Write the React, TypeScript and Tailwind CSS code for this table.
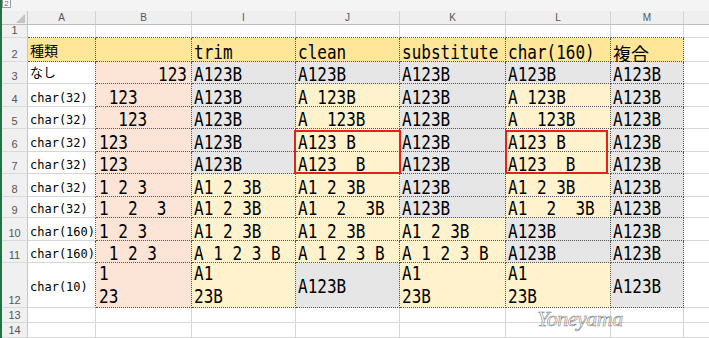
import React from "react";

type Bg = "w" | "g" | "y" | "p" | "h";
type Cell = { t: string; bg: Bg; kind?: "a" | "jp14" | "jp13" | "jp18"; r?: boolean; c?: boolean; red?: "J" | "L" };
type Row = { n: number; h: string; cells: Cell[] };

const BG: Record<Bg, string> = {
  w: "bg-white",
  g: "bg-[#e7e6e6]",
  y: "bg-[#fff2cc]",
  p: "bg-[#fce4d6]",
  h: "bg-[#ffe699]",
};

const WIDTHS = ["w-[68px]", "w-[96px]", "w-[104px]", "w-[104px]", "w-[106px]", "w-[105px]", "w-[73px]"];
const LETTERS = ["A", "B", "I", "J", "K", "L", "M"];

const g = (t = "A123B"): Cell => ({ t, bg: "g" });
const y = (t: string): Cell => ({ t, bg: "y" });
const a = (t: string): Cell => ({ t, bg: "w", kind: "a" });
const p = (t: string): Cell => ({ t, bg: "p" });

const ROWS: Row[] = [
  {
    n: 2,
    h: "h-[24px]",
    cells: [
      { t: "種類", bg: "h", kind: "jp14" },
      { t: "", bg: "h" },
      { t: "trim", bg: "h" },
      { t: "clean", bg: "h" },
      { t: "substitute", bg: "h" },
      { t: "char(160)", bg: "h" },
      { t: "複合", bg: "h", kind: "jp18" },
    ],
  },
  { n: 3, h: "h-[22px]", cells: [{ t: "なし", bg: "w", kind: "jp13" }, { t: "123", bg: "p", r: true }, g(), g(), g(), g(), g()] },
  { n: 4, h: "h-[23px]", cells: [a("char(32)"), p(" 123"), g(), y("A 123B"), g(), y("A 123B"), g()] },
  { n: 5, h: "h-[22px]", cells: [a("char(32)"), p("  123"), g(), y("A  123B"), g(), y("A  123B"), g()] },
  {
    n: 6,
    h: "h-[23px]",
    cells: [a("char(32)"), p("123"), g(), { t: "A123 B", bg: "y", red: "J" }, g(), { t: "A123 B", bg: "y", red: "L" }, g()],
  },
  { n: 7, h: "h-[22px]", cells: [a("char(32)"), p("123"), g(), y("A123  B"), g(), y("A123  B"), g()] },
  { n: 8, h: "h-[23px]", cells: [a("char(32)"), p("1 2 3"), y("A1 2 3B"), y("A1 2 3B"), g(), y("A1 2 3B"), g()] },
  { n: 9, h: "h-[21px]", cells: [a("char(32)"), p("1  2  3"), y("A1 2 3B"), y("A1  2  3B"), g(), y("A1  2  3B"), g()] },
  { n: 10, h: "h-[23px]", cells: [a("char(160)"), p("1 2 3"), y("A1 2 3B"), y("A1 2 3B"), y("A1 2 3B"), g(), g()] },
  { n: 11, h: "h-[22px]", cells: [a("char(160)"), p(" 1 2 3"), y("A 1 2 3 B"), y("A 1 2 3 B"), y("A 1 2 3 B"), g(), g()] },
  {
    n: 12,
    h: "h-[45px]",
    cells: [
      { t: "char(10)", bg: "w", kind: "a", c: true },
      p("1\n23"),
      y("A1\n23B"),
      { t: "A123B", bg: "g", c: true },
      y("A1\n23B"),
      y("A1\n23B"),
      { t: "A123B", bg: "g", c: true },
    ],
  },
];

function RowHead({ n }: { n?: number }) {
  return (
    <div className="w-[26px] shrink-0 flex items-end justify-center pb-[1px] bg-[#f0f0f0] border-r border-b border-r-[#c6c6c6] border-b-[#dadada] font-['Liberation_Sans',sans-serif] text-[11px] leading-[12px] text-[#555]">
      {n}
    </div>
  );
}

function CellView({ cell, col, row }: { cell: Cell; col: number; row: number }) {
  const colA = col === 0;
  const border =
    colA && row > 2
      ? "border-r border-b border-b-[#d6d6d6] border-r-[#555] [border-right-style:dotted]"
      : "border-r border-b border-dotted border-[#555]";
  const multi = cell.t.includes("\n");
  const pad = col === 1 ? (cell.r ? "pr-[4px] justify-end" : "pl-[3px]") : "pl-[2px]";

  let content: React.ReactNode = null;
  if (cell.kind === "a") {
    content = <span className="whitespace-pre font-['DejaVu_Sans_Mono',monospace] text-[12px] leading-[14px] text-black">{cell.t}</span>;
  } else if (cell.kind === "jp14") {
    content = <span className="font-['Noto_Sans_CJK_JP',sans-serif] text-[14px] leading-[16px] text-black">{cell.t}</span>;
  } else if (cell.kind === "jp13") {
    content = <span className="font-['Noto_Sans_CJK_JP',sans-serif] text-[13px] leading-[16px] text-black">{cell.t}</span>;
  } else if (cell.kind === "jp18") {
    content = <span className="font-['Noto_Sans_CJK_JP',sans-serif] text-[18px] leading-[16px] text-black">{cell.t}</span>;
  } else if (cell.t) {
    // tall, narrow gothic look: 16px mono stretched vertically
    content = (
      <span
        className={`inline-block whitespace-pre font-['DejaVu_Sans_Mono',monospace] text-[16px] text-black origin-bottom scale-y-[1.25] translate-y-[2px] ${
          multi ? "leading-[18.4px]" : "leading-[16px]"
        }`}
      >
        {cell.t}
      </span>
    );
  }

  const valign = cell.c
    ? "items-center pt-[3px]"
    : cell.kind === "a"
      ? "items-end pb-[1px]"
      : cell.kind === "jp14" || cell.kind === "jp13"
        ? "items-end pb-[3px]"
        : "items-end";

  return (
    <div className={`relative shrink-0 flex ${WIDTHS[col]} ${BG[cell.bg]} ${border} ${pad} ${valign}`}>
      {content}
      {cell.red === "J" && (
        <div className="absolute left-[-2px] top-[1px] w-[107px] h-[44px] border-2 border-[#e8201c] z-10 pointer-events-none" />
      )}
      {cell.red === "L" && (
        <div className="absolute left-[-1px] top-[1px] w-[103px] h-[44px] border-2 border-[#e8201c] z-10 pointer-events-none" />
      )}
    </div>
  );
}

function EmptyRow({ n, h, dottedBottom }: { n: number; h: string; dottedBottom?: boolean }) {
  return (
    <div className={`flex ${h}`}>
      <RowHead n={n} />
      {WIDTHS.map((w, i) => (
        <div
          key={i}
          className={`shrink-0 ${w} bg-white border-r border-b border-r-[#d6d6d6] ${
            dottedBottom ? "border-b-[#555] [border-bottom-style:dotted]" : "border-b-[#d6d6d6]"
          }`}
        />
      ))}
      <div className="flex-1 bg-white border-b border-[#d6d6d6]" />
    </div>
  );
}

export default function App() {
  return (
    <div className="relative w-[709px] h-[338px] overflow-hidden bg-white border-l-2 border-[#217346]">
      {/* outline level strip */}
      <div className="h-[11px] bg-[#f4f4f4] flex items-start">
        <div className="w-[9px] h-[8px] border border-t-0 border-[#9c9c9c] bg-white flex items-center justify-center font-['Liberation_Sans',sans-serif] text-[8px] leading-[8px] text-[#666]">
          2
        </div>
      </div>

      {/* column headers */}
      <div className="flex h-[14px] bg-[#efefef] border-b border-[#bdbdbd]">
        <div className="w-[26px] shrink-0 relative border-r border-[#c6c6c6]">
          <div className="absolute right-[2px] bottom-[1px] w-[9px] h-[9px] bg-[#c3c3c3] [clip-path:polygon(100%_0,100%_100%,0_100%)]" />
        </div>
        {WIDTHS.map((w, i) => (
          <div
            key={i}
            className={`shrink-0 ${w} flex items-center justify-center border-r border-[#d4d4d4] font-['Liberation_Sans',sans-serif] text-[10px] leading-[10px] text-[#555]`}
          >
            {LETTERS[i]}
          </div>
        ))}
        <div className="flex-1" />
      </div>

      <EmptyRow n={1} h="h-[13px]" dottedBottom />

      {ROWS.map((row) => (
        <div key={row.n} className={`flex ${row.h}`}>
          <RowHead n={row.n} />
          {row.cells.map((cell, i) => (
            <CellView key={i} cell={cell} col={i} row={row.n} />
          ))}
          <div className="flex-1 bg-white border-b border-[#d6d6d6]" />
        </div>
      ))}

      <EmptyRow n={13} h="h-[15px]" />
      <EmptyRow n={14} h="h-[15px]" />

      {/* watermark */}
      <div className="absolute left-[535px] top-[307px] font-['Liberation_Serif',serif] italic text-[22px] leading-[24px] tracking-[-0.5px] text-transparent [-webkit-text-stroke:0.6px_#888] pointer-events-none">
        Yoneyama
      </div>
    </div>
  );
}
